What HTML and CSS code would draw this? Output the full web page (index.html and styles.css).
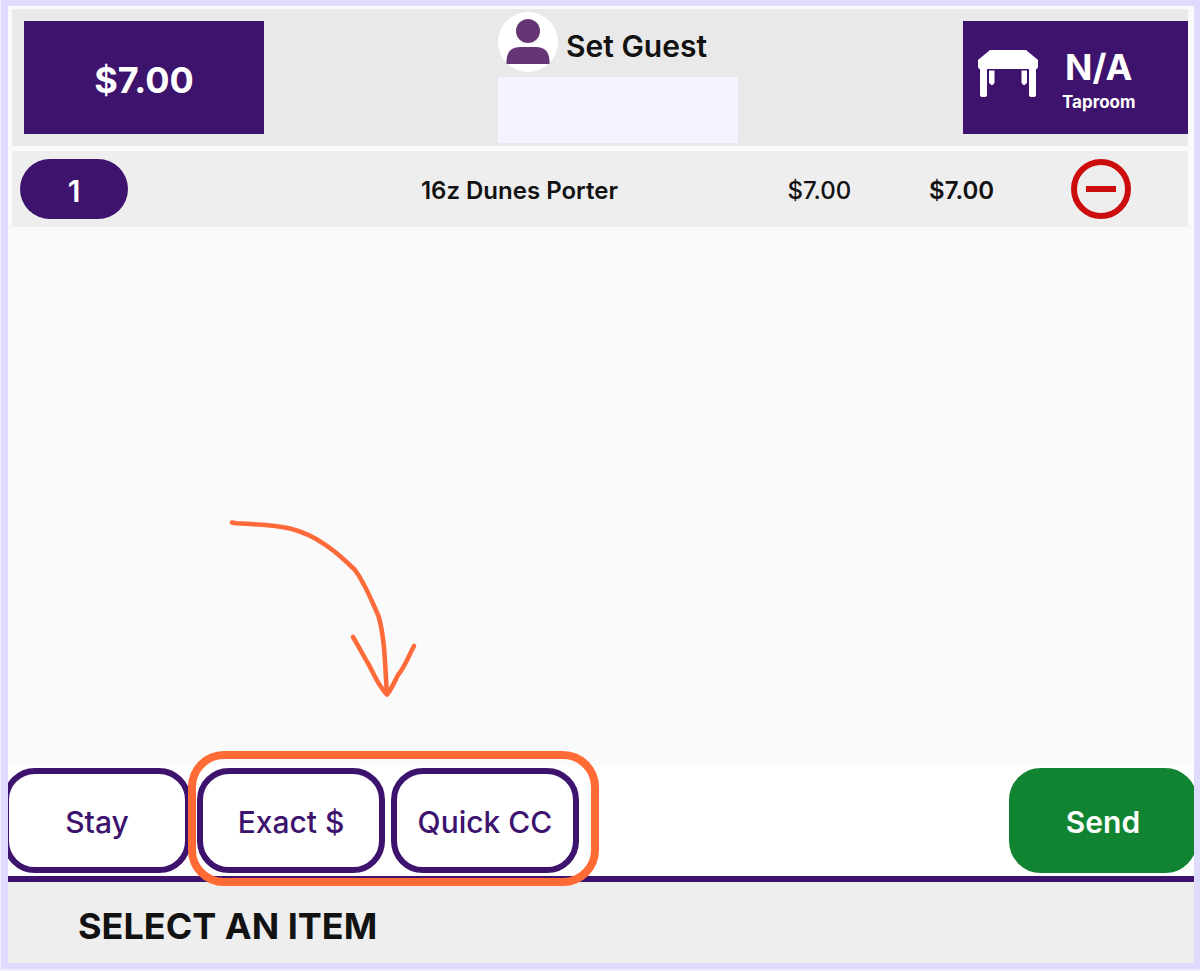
FILE: index.html
```html
<!DOCTYPE html>
<html lang="en">
<head>
<meta charset="utf-8">
<meta name="viewport" content="width=device-width, initial-scale=1">
<title>Order</title>
<link rel="stylesheet" href="styles.css">
</head>
<body>
<div class="frame">
  <header class="topbar">
    <button class="tile total-tile" type="button">$7.00</button>
    <div class="guest">
      <button class="guest-button" type="button">
        <svg class="avatar" viewBox="0 0 60 60" aria-hidden="true">
          <circle cx="30" cy="30" r="30" fill="#fff"/>
          <circle cx="30" cy="19" r="12" fill="#663576"/>
          <path d="M8.500 52V49Q9 35 22 35H38Q51 35 51.500 49V52Z" fill="#663576"/>
        </svg>
        <span>Set Guest</span>
      </button>
      <input class="guest-input" type="text" aria-label="Guest">
    </div>
    <button class="tile table-tile" type="button">
      <svg class="table-icon" viewBox="0 0 60 47" aria-hidden="true">
        <path d="M12 0H48L60 10V17Q60 19 58 19V45Q58 47 56 47H53Q51 47 51 45V19H9V45Q9 47 7 47H4Q2 47 2 45V19Q0 19 0 17V10Z" fill="#fff"/>
        <path d="M11 20.500H16.500V33L14 35.500L11 33ZM43.500 20.500H49V33L46 35.500L43.500 33Z" fill="#fff"/>
      </svg>
      <span class="table-label">
        <span class="table-name">N/A</span>
        <span class="table-area">Taproom</span>
      </span>
    </button>
  </header>

  <main class="order">
    <table class="items">
      <colgroup><col class="col-qty"><col class="col-name"><col class="col-price"><col class="col-sum"><col class="col-remove"></colgroup>
      <tbody>
        <tr>
          <td class="cell-qty"><button class="qty" type="button">1</button></td>
          <td class="cell-name">16z Dunes Porter</td>
          <td class="cell-price">$7.00</td>
          <td class="cell-sum">$7.00</td>
          <td class="cell-remove">
            <button class="remove" type="button" aria-label="Remove item">
              <svg viewBox="0 0 60 60" aria-hidden="true">
                <circle cx="30" cy="30" r="27" fill="none" stroke="#cd0d0d" stroke-width="6"/>
                <path d="M15 30H45" stroke="#cd0d0d" stroke-width="6"/>
              </svg>
            </button>
          </td>
        </tr>
      </tbody>
    </table>
  </main>

  <div class="actions">
    <button class="action" type="button">Stay</button>
    <div class="quick-pay">
      <button class="action" type="button">Exact $</button>
      <button class="action" type="button">Quick CC</button>
      <span class="highlight"></span>
      <svg class="arrow" viewBox="225 515 195 190" aria-hidden="true">
        <g fill="none" stroke="#ff6a3a" stroke-width="4.600" stroke-linecap="round" stroke-linejoin="round">
          <path d="M232 522.500L236 523.300C254 524 275 525 290 528.500C316 535 336 551 355 570C366 585 372 602 378.500 616C385 638 385 667 387 694"/>
          <path d="M353 637C359 647 363 655 369 665C374 675 379 687 387 694.500C391 690 394 683 398 675C405 667 409 655 414 646"/>
        </g>
      </svg>
    </div>
    <button class="action send" type="button">Send</button>
  </div>

  <footer class="prompt">
    <h1>SELECT AN ITEM</h1>
  </footer>
</div>
</body>
</html>
```
FILE: styles.css
```css
:root {
  --purple: #3d136d;
  --lavender: #dfdbff;
  --ink: #121212;
}

* {
  box-sizing: border-box;
}

body {
  margin: 0;
  padding: 0 0 2px 1px;
  background: #efedff;
  color: var(--ink);
  font-family: Inter, "Liberation Sans", sans-serif;
}

button,
input {
  margin: 0;
  padding: 0;
  border: 0;
  font: inherit;
  color: inherit;
}

button {
  cursor: pointer;
}

.frame {
  display: flex;
  flex-direction: column;
  min-height: calc(100vh - 2px);
  border: 6px solid var(--lavender);
  border-left-width: 7px;
  background: #fafafa;
  overflow: hidden;
}

.topbar {
  display: grid;
  grid-template-columns: 79fr 40fr 75fr;
  align-items: center;
  margin: 3px 6px 5px 4px;
  padding-left: 12px;
  background: #e9e9e9;
}

.tile {
  height: 113px;
  background: var(--purple);
  color: #fff;
  font-weight: 700;
}

.total-tile {
  width: 240px;
  padding-top: 4px;
  font-size: 36px;
}

.guest {
  display: flex;
  flex-direction: column;
  gap: 5px;
  padding: 3px 0;
}

.guest-button {
  display: flex;
  align-items: center;
  gap: 8px;
  background: none;
  font-size: 30px;
  font-weight: 600;
  white-space: nowrap;
}

.guest-button span {
  padding-top: 8px;
}

.avatar {
  flex: none;
  width: 60px;
  height: 60px;
}

.guest-input {
  width: 100%;
  height: 66px;
  padding: 0 12px;
  background: #f5f3ff;
  font-size: 24px;
}

.table-tile {
  display: flex;
  align-items: center;
  justify-self: end;
  gap: 24px;
  width: 225px;
  padding: 4px 15px 0;
}

.table-icon {
  flex: none;
  width: 60px;
  height: 47px;
  margin-bottom: 12px;
}

.table-label {
  display: flex;
  flex-direction: column;
  align-items: center;
}

.table-name {
  font-size: 36px;
  line-height: 44px;
}

.table-area {
  font-size: 17px;
  line-height: 26px;
}

.order {
  flex: 1;
  padding: 0 6px 0 4px;
}

.items {
  width: 100%;
  table-layout: fixed;
  border-collapse: collapse;
  background: #eee;
  font-size: 24px;
  text-align: center;
}

.col-qty { width: 23.6%; }
.col-name { width: 39.1%; }
.col-price { width: 11.9%; }
.col-sum { width: 12.3%; }
.col-remove { width: 13.1%; }

.items td {
  height: 76px;
  padding: 2px 0 0;
  vertical-align: middle;
}

.items .cell-qty {
  padding: 0 8px;
  text-align: left;
}

.cell-price {
  font-weight: 500;
}

.cell-name,
.cell-sum {
  font-weight: 600;
}

.items .cell-remove {
  padding: 0 20px 0 0;
}

.qty {
  display: block;
  width: 108px;
  height: 60px;
  padding-top: 4px;
  border-radius: 30px;
  background: var(--purple);
  color: #fff;
  font-size: 30px;
  font-weight: 600;
}

.remove {
  display: block;
  width: 60px;
  height: 60px;
  margin: 0 auto;
  background: none;
}

.remove svg {
  display: block;
}

.actions {
  display: flex;
  gap: 6px;
  padding: 3px 0;
  margin: 0 -3px 0 -5px;
  border-bottom: 6px solid var(--purple);
  background: #fff;
}

.action {
  width: 188px;
  height: 105px;
  padding-top: 2px;
  border: 6px solid var(--purple);
  border-radius: 32px;
  background: #fff;
  color: var(--purple);
  font-size: 30px;
  font-weight: 500;
}

.quick-pay {
  position: relative;
  display: flex;
  gap: 6px;
}

.highlight {
  position: absolute;
  inset: -17px -20px -13px -9px;
  border: 8px solid #ff6a35;
  border-radius: 36px;
  pointer-events: none;
}

.arrow {
  position: absolute;
  top: -253px;
  left: 28px;
  width: 195px;
  height: 190px;
  pointer-events: none;
}

.send {
  margin-left: auto;
  border-color: #118432;
  background: #118432;
  color: #fff;
  font-weight: 600;
}

.prompt {
  display: flex;
  align-items: center;
  height: 81px;
  padding: 6px 70px 0;
  background: #eee;
}

.prompt h1 {
  margin: 0;
  font-size: 36px;
  font-weight: 700;
}
```
